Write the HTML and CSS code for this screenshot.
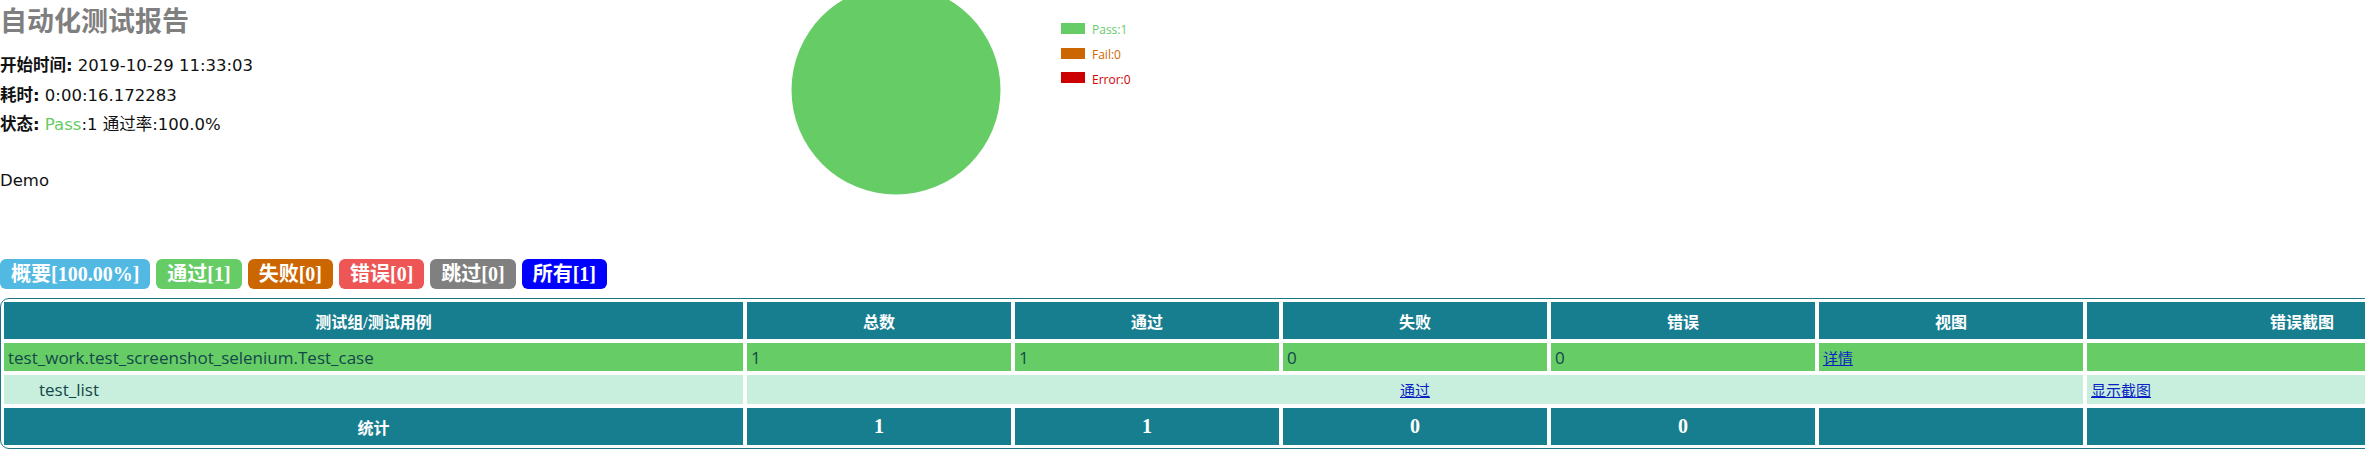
FILE: index.html
```html
<!DOCTYPE html>
<html lang="zh-CN">
<head>
  <meta charset="UTF-8">
  <meta name="viewport" content="width=device-width, initial-scale=1.0">
  <title>自动化测试报告</title>
  <link rel="stylesheet" href="styles.css">
</head>
<body>
  <div class="header">
    <div class="info">
      <h1>自动化测试报告</h1>
      <p><strong>开始时间:</strong> 2019-10-29 11:33:03</p>
      <p><strong>耗时:</strong> 0:00:16.172283</p>
      <p><strong>状态:</strong> <span class="pass">Pass</span>:1 通过率:100.0%</p>
      <p class="desc">Demo</p>
    </div>

    <svg class="chart" width="420" height="200" viewBox="0 0 420 200">
      <circle cx="106" cy="90" r="104.5" fill="#66cc66" />
      <rect x="271" y="23" width="24" height="11" fill="#66cc66" />
      <text x="302" y="34" fill="#66cc66">Pass:1</text>
      <rect x="271" y="48" width="24" height="11" fill="#cc6600" />
      <text x="302" y="59" fill="#cc6600">Fail:0</text>
      <rect x="271" y="72" width="24" height="11" fill="#cc0000" />
      <text x="302" y="84" fill="#cc0000">Error:0</text>
    </svg>
  </div>

  <div class="filters">
    <a class="btn btn-summary">概要[100.00%]</a>
    <a class="btn btn-pass">通过[1]</a>
    <a class="btn btn-fail">失败[0]</a>
    <a class="btn btn-error">错误[0]</a>
    <a class="btn btn-skip">跳过[0]</a>
    <a class="btn btn-all">所有[1]</a>
  </div>

  <div class="result-wrap">
    <table class="result">
      <tr class="head-row">
        <th class="col-name">测试组/测试用例</th>
        <th class="col-num">总数</th>
        <th class="col-num">通过</th>
        <th class="col-num">失败</th>
        <th class="col-num">错误</th>
        <th class="col-num">视图</th>
        <th class="col-shot">错误截图</th>
      </tr>
      <tr class="pass-class">
        <td>test_work.test_screenshot_selenium.Test_case</td>
        <td>1</td>
        <td>1</td>
        <td>0</td>
        <td>0</td>
        <td><a href="#">详情</a></td>
        <td></td>
      </tr>
      <tr class="pass-case">
        <td><div class="testcase">test_list</div></td>
        <td colspan="5" class="center"><a href="#">通过</a></td>
        <td><a href="#">显示截图</a></td>
      </tr>
      <tr class="total-row">
        <td class="total-label">统计</td>
        <td>1</td>
        <td>1</td>
        <td>0</td>
        <td>0</td>
        <td></td>
        <td></td>
      </tr>
    </table>
  </div>
</body>
</html>
```

FILE: styles.css
```css
html, body {
  overflow: hidden;
}
body {
  margin: 0;
  font-family: "DejaVu Sans", "Noto Sans CJK SC", sans-serif;
  font-size: 16.5px;
  color: #111;
  background: #fff;
}
.header {
  display: flex;
  align-items: flex-start;
  height: 200px;
}
.info {
  width: 790px;
}
h1 {
  margin: 0 0 11px;
  font-size: 27px;
  line-height: 40px;
  color: #7f7f7f;
  font-family: "Noto Sans CJK SC", sans-serif;
  font-weight: bold;
}
.info p {
  margin: 0;
  line-height: 29.5px;
}
.pass {
  color: #66cc66;
}
.info .desc {
  margin-top: 26px;
}
.chart {
  display: block;
}
.chart text {
  font-family: "Open Sans", sans-serif;
  font-size: 12px;
}
.filters {
  display: flex;
  gap: 6px;
  margin-top: 59px;
  margin-bottom: 9px;
}
.btn {
  display: block;
  height: 30px;
  line-height: 30px;
  padding: 0 11px;
  border-radius: 6px;
  color: #fff;
  font-family: "Liberation Serif", "Noto Sans CJK SC", serif;
  font-size: 20px;
  font-weight: bold;
}
.btn-summary { background: #52b9e3; }
.btn-pass { background: #66cc66; }
.btn-fail { background: #cc6600; }
.btn-error { background: #ee5555; }
.btn-skip { background: #808080; }
.btn-all { background: #0000ff; }

.result-wrap {
  width: 2519px;
  border: 1px solid #1a7585;
  border-radius: 9px;
}
.result {
  table-layout: fixed;
  width: 2517px;
  border-collapse: separate;
  border-spacing: 2px;
}
.result th,
.result td {
  box-sizing: border-box;
  border: 1px solid #fff;
  padding: 0 4px;
}
.col-name { width: 741px; }
.col-num { width: 266px; }
.col-shot { width: 432px; }
.head-row th,
.total-row td {
  height: 39px;
  background: #177e8f;
  color: #fff;
  font-family: "Liberation Serif", "Noto Sans CJK SC", serif;
  font-size: 16px;
  font-weight: bold;
  text-align: center;
}
.total-row td {
  font-size: 20px;
}
.total-row .total-label {
  font-size: 16px;
}
.pass-class td,
.pass-case td {
  color: #134848;
  font-family: "Open Sans", "Noto Sans CJK SC", sans-serif;
  font-size: 17px;
}
.pass-class td {
  height: 30px;
  background: #66cc66;
}
.pass-case td {
  height: 31px;
  background: #c8efdd;
}
.result a {
  color: #0a1fc4;
  font-size: 15px;
  text-decoration: underline;
}
.testcase {
  margin-left: 31px;
}
.center {
  text-align: center;
}
```
